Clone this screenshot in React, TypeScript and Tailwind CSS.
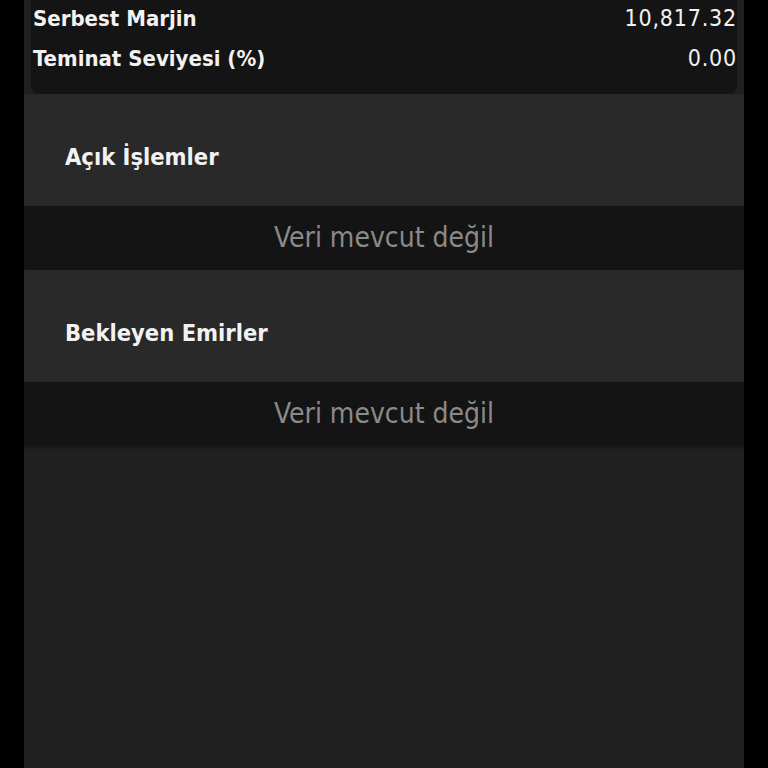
const summary = [
  { label: 'Serbest Marjin', value: '10,817.32' },
  { label: 'Teminat Seviyesi (%)', value: '0.00' },
]

const sections = ['Açık İşlemler', 'Bekleyen Emirler']

function SectionBlock({ title }: { title: string }) {
  return (
    <div>
      <div className="flex h-[112px] items-center bg-[#292929] pl-[41px] pt-[16px]">
        <span className="text-[23.5px] font-bold text-[#f2f2f2]">{title}</span>
      </div>
      <div className="flex h-[64px] items-center justify-center rounded-b-[4px] bg-[#141414] shadow-[0_2px_3px_rgba(0,0,0,0.35)]">
        <span className="text-[28px] text-[#8a8a8a]">Veri mevcut değil</span>
      </div>
    </div>
  )
}

export default function App() {
  return (
    <div
      className="flex h-[768px] w-[768px] justify-center overflow-hidden bg-black"
      style={{ fontFamily: '"DejaVu Sans Condensed", "DejaVu Sans", sans-serif' }}
    >
      <div className="flex w-[720px] flex-col bg-[#202020]">
        <div className="mx-[7px] -mt-[2px] rounded-b-[8px] bg-[#141414] pb-[16px] pl-[2px] pr-[1px]">
          {summary.map((row) => (
            <div key={row.label} className="flex h-[40px] items-center justify-between">
              <span className="text-[22px] font-bold text-[#f2f2f2]">{row.label}</span>
              <span className="-mr-[1px] text-[23px] tracking-[0.8px] text-[#f2f2f2]">{row.value}</span>
            </div>
          ))}
        </div>
        {sections.map((title) => (
          <SectionBlock key={title} title={title} />
        ))}
      </div>
    </div>
  )
}
